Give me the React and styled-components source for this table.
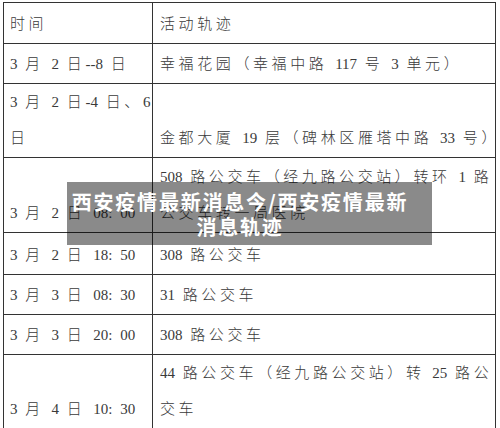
import styled, { createGlobalStyle } from "styled-components";

const rows = [
  { h: 40, time: ["3 月 2 日--8 日"], place: ["幸福花园（幸福中路 117 号 3 单元）"] },
  { h: 72, time: ["3 月 2 日-4 日、6", "日"], place: ["金都大厦 19 层（碑林区雁塔中路 33 号）"] },
  {
    h: 75,
    time: ["3 月 2 日 08: 00"],
    place: ["508 路公交车（经九路公交站）转环 1 路", "公交车转一局医院"],
  },
  { h: 42, time: ["3 月 2 日 18: 50"], place: ["308 路公交车"] },
  { h: 40, time: ["3 月 3 日 08: 30"], place: ["31 路公交车"] },
  { h: 40, time: ["3 月 3 日 20: 00"], place: ["308 路公交车"] },
  {
    h: 73,
    time: ["3 月 4 日 10: 30"],
    place: ["44 路公交车（经九路公交站）转 25 路公", "交车"],
  },
];

// CJK runs get wide tracking, latin runs (digits) stay tight
function Spaced({ text }) {
  const parts = text.split(/([\u3000-\u9fff\uff00-\uffef]+)/).filter(Boolean);
  return parts.map((p, i) =>
    /[\u3000-\u9fff\uff00-\uffef]/.test(p) ? <Cjk key={i}>{p}</Cjk> : <span key={i}>{p}</span>
  );
}

export default function App() {
  return (
    <>
      <GlobalStyle />
      <Page>
        <Table>
          <colgroup>
            <col style={{ width: 149 }} />
            <col />
          </colgroup>
          <tbody>
            <Row $h={41}>
              <Cell>
                <Line><Spaced text="时间" /></Line>
              </Cell>
              <Cell $wide>
                <Line><Spaced text="活动轨迹" /></Line>
              </Cell>
            </Row>
            {rows.map((r, i) => (
              <Row key={i} $h={r.h}>
                <Cell>
                  {r.time.map((t, j) => (
                    <Line key={j}><Spaced text={t} /></Line>
                  ))}
                </Cell>
                <Cell $wide>
                  {r.place.map((t, j) => (
                    <Line key={j}><Spaced text={t} /></Line>
                  ))}
                </Cell>
              </Row>
            ))}
            <Row $h={10}>
              <Cell />
              <Cell $wide />
            </Row>
          </tbody>
        </Table>
        <Caption>
          <CaptionText>西安疫情最新消息今/西安疫情最新消息轨迹</CaptionText>
        </Caption>
      </Page>
    </>
  );
}

const GlobalStyle = createGlobalStyle`
  html, body {
    margin: 0;
    padding: 0;
    background: #fff;
    overflow: hidden;
  }
`;

const Page = styled.div`
  position: relative;
  width: 500px;
  height: 428px;
  overflow: hidden;
  padding: 2px 0 0 3px;
  box-sizing: border-box;
`;

const Table = styled.table`
  width: 493px;
  border-collapse: collapse;
  table-layout: fixed;
  font-family: "Liberation Serif", "Noto Sans CJK SC", serif;
  font-size: 15px;
  font-weight: 300;
  color: #3a3a3a;
  word-spacing: 4px;
`;

const Row = styled.tr`
  height: ${(p) => p.$h}px;
`;

const Cell = styled.td`
  border: 1px solid #333;
  padding: 0 0 1px ${(p) => (p.$wide ? 7 : 6)}px;
  vertical-align: bottom;
  white-space: nowrap;
  overflow: hidden;
`;

const Line = styled.div`
  line-height: 36px;
  height: 36px;
`;

const Cjk = styled.span`
  letter-spacing: 3.6px;
`;

const Caption = styled.div`
  position: absolute;
  left: 67px;
  top: 182px;
  width: 365px;
  height: 63px;
  box-sizing: border-box;
  padding: 0 22px 0 3px;
  background: rgba(0, 0, 0, 0.46);
  display: flex;
  align-items: center;
`;

const CaptionText = styled.div`
  width: 340px;
  text-align: center;
  color: #fff;
  font-family: "Noto Sans CJK SC", sans-serif;
  font-weight: 700;
  font-size: 20px;
  line-height: 25px;
  letter-spacing: 1.8px;
`;
